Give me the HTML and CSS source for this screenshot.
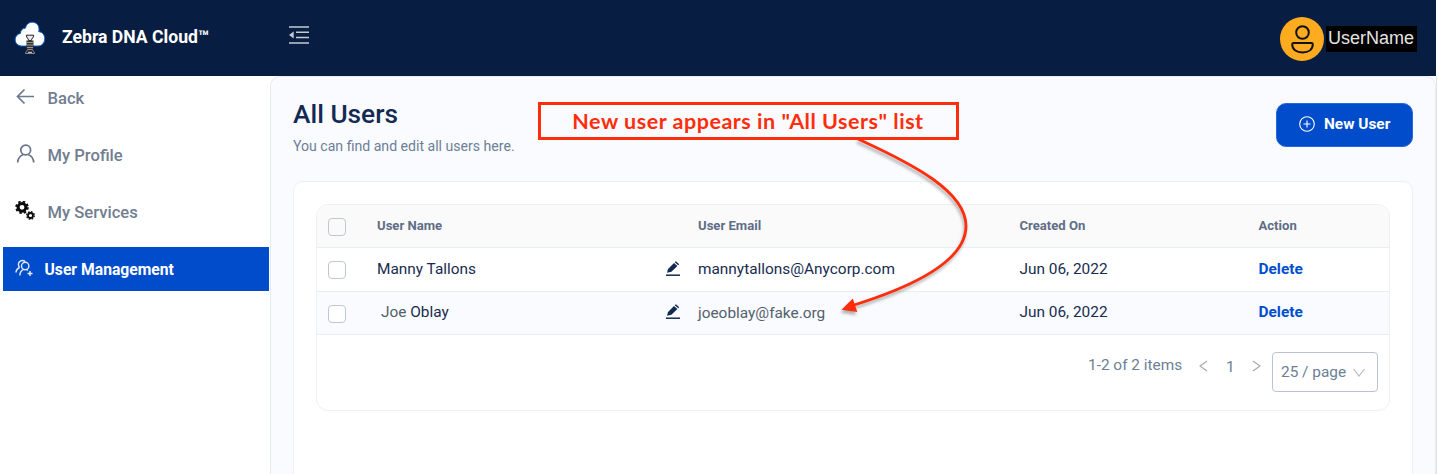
FILE: index.html
```html
<!DOCTYPE html>
<html lang="en">
<head>
<meta charset="utf-8">
<title>Zebra DNA Cloud</title>
<link rel="stylesheet" href="styles.css">
</head>
<body>
<div class="app">
  <header class="header">
    <svg class="logo" width="32" height="34" viewBox="0 0 32 34">
      <path d="M7 25a6.300 6.300 0 0 1-.6-12.500c.2-3.500 2.300-5.500 5-5.300C12.500 3 15 1.200 18.200 1.200c4.200 0 6.800 3 6.800 7 0 1-.1 1.600-.3 2.500 3.600.1 6 3.100 6 6.800 0 4.300-2.700 7.500-6.700 7.500z" fill="#fff" stroke="#0a62c9" stroke-width="1"/>
      <path d="M12.300 14.200h7.400c0 3-2.300 3-2.300 5.300h-2.800c0-2.300-2.300-2.300-2.300-5.300z" fill="#e8e8e8" stroke="#222" stroke-width="1"/>
      <path d="M12.500 19.500h7v8.500h-7z" fill="#333"/>
      <path d="M13 21.500h6M13 24h6M13 26.500h6" stroke="#999" stroke-width="1"/>
      <path d="M13.500 28.500h5c0 1.500 2 2 2 4h-9c0-2 2-2.500 2-4z" fill="#222" stroke="#aaa" stroke-width=".8"/>
      <path d="M14 31.300h4" stroke="#ddd"/>
    </svg>
    <span class="brand">Zebra DNA Cloud™</span>
    <svg class="fold" width="20" height="18" viewBox="0 0 20 18">
      <path d="M0 1h20M7 6.300h13M7 11.500h13M0 17h20" stroke="#c3cad3" stroke-width="1.600"/>
      <path d="M0 9l4.700-3.600v7.200z" fill="#c3cad3"/>
    </svg>
    <div class="account">
      <svg width="44" height="44" viewBox="0 0 44 44">
        <circle cx="22" cy="22" r="22" fill="#ffab1f"/>
        <circle cx="22.500" cy="15.500" r="6.300" fill="none" stroke="#111" stroke-width="2"/>
        <path d="M13.500 26h18a1.300 1.300 0 0 1 1.300 1.300c0 5-4 8.200-10.300 8.200s-10.300-3.200-10.300-8.200A1.300 1.300 0 0 1 13.500 26z" fill="none" stroke="#111" stroke-width="2"/>
      </svg>
      <span class="username">UserName</span>
    </div>
  </header>
  <div class="body">
    <nav class="sidebar">
      <a class="item"><svg width="20" height="20" viewBox="0 0 20 20"><path d="M19 9.500H3M9.500 2.500L2.500 9.500l7 7" fill="none" stroke="#6b7a90" stroke-width="1.700"/></svg><span>Back</span></a>
      <a class="item"><svg width="20" height="20" viewBox="0 0 20 20"><circle cx="10.700" cy="6" r="4.900" fill="none" stroke="#66758c" stroke-width="1.700"/><path d="M2.700 18.500c.2-4 2.300-6.700 5.400-7.800M18.700 18.500c-.2-4-2.300-6.700-5.400-7.800" fill="none" stroke="#66758c" stroke-width="1.700"/></svg><span>My Profile</span></a>
      <a class="item"><svg width="20" height="20" viewBox="0 0 20 20"><g fill="none" stroke="#0c0c0c"><circle cx="7" cy="6.300" r="3.900" stroke-width="3"/><circle cx="7" cy="6.300" r="5.800" stroke-width="1.900" stroke-dasharray="2.500 2.055"/><circle cx="15.500" cy="14.500" r="2.500" stroke-width="1.800"/><circle cx="15.500" cy="14.500" r="3.800" stroke-width="1.300" stroke-dasharray="1.600 1.384"/></g></svg><span>My Services</span></a>
      <a class="item active"><svg width="18" height="18" viewBox="0 0 18 18"><g fill="none" stroke="#e5edfa" stroke-width="1.400"><circle cx="10.200" cy="7" r="3.700"/><path d="M4.800 16.500c.1-3.400 1.700-5.300 4-6.200M4.700 8.500A4 4 0 1 1 10.200 2.600M1 13.500c.1-2.500 1.500-4 3.700-5M11.500 10.500l1.500 1M15 12v5M12.500 14.500h5"/></g></svg><span>User Management</span></a>
    </nav>
    <main class="main">
      <div class="heading">
        <div class="titles">
          <h1>All Users</h1>
          <p>You can find and edit all users here.</p>
        </div>
        <div class="callout"><span>New user appears in "All Users" list</span></div>
        <button class="new-user"><svg width="16" height="16" viewBox="0 0 16 16"><circle cx="8" cy="8" r="7.300" fill="none" stroke="#fff" stroke-width="1.100"/><path d="M8 4.500v7M4.500 8h7" stroke="#fff" stroke-width="1.100"/></svg><span>New User</span></button>
      </div>
      <section class="card">
        <div class="table">
          <div class="row head"><i class="check"></i><span>User Name</span><span></span><span>User Email</span><span>Created On</span><span>Action</span></div>
          <div class="row"><i class="check"></i><span>Manny Tallons</span>
            <svg class="pen" width="16" height="16" viewBox="0 0 16 16"><path d="M1 14.200h14" stroke="#132a4f" stroke-width="1.500"/><path d="M2 11.700l1-3.600L9 2l3.400 3-6 5.700zM9.700 1.300l1.200-1 3.300 2.900-1 1.100z" fill="#132a4f"/></svg>
            <span>mannytallons@Anycorp.com</span><span>Jun 06, 2022</span><a class="delete">Delete</a></div>
          <div class="row alt"><i class="check"></i><span class="joe"><em>Joe</em> Oblay</span>
            <svg class="pen" width="16" height="16" viewBox="0 0 16 16"><path d="M1 14.200h14" stroke="#132a4f" stroke-width="1.500"/><path d="M2 11.700l1-3.600L9 2l3.400 3-6 5.700zM9.700 1.300l1.200-1 3.300 2.900-1 1.100z" fill="#132a4f"/></svg>
            <span class="grey">joeoblay@fake.org</span><span>Jun 06, 2022</span><a class="delete">Delete</a></div>
          <div class="pager">
            <span class="count">1-2 of 2 items</span>
            <svg class="prev" width="9" height="12" viewBox="0 0 9 12"><path d="M8 1L1 6l7 5" fill="none" stroke="#a0a7b1" stroke-width="1.100"/></svg>
            <span class="page">1</span>
            <svg class="next" width="9" height="12" viewBox="0 0 9 12"><path d="M1 1l7 5-7 5" fill="none" stroke="#a0a7b1" stroke-width="1.100"/></svg>
            <div class="select"><span>25 / page</span><svg width="12" height="9" viewBox="0 0 12 9"><path d="M.6 1L6 8l5.400-7" fill="none" stroke="#b4bac2" stroke-width="1.100"/></svg></div>
          </div>
        </div>
      </section>
    </main>
  </div>
  <svg class="arrow" width="160" height="190" viewBox="830 130 160 190">
    <path d="M858 139C915 165 966 192 966 226C966 264 902 290 854 305" fill="none" stroke="#ff2d0b" stroke-width="2.800"/>
    <path d="M841.500 309.700L852.800 298.500L857.300 312Z" fill="#ff2d0b"/>
  </svg>
</div>
</body>
</html>
```
FILE: styles.css
```css
* { box-sizing: border-box; }
body { margin: 0; background: #fff; font-family: Roboto, "Liberation Sans", sans-serif; }
.app { position: relative; width: 1439px; height: 474px; overflow: hidden; }
.app span { white-space: nowrap; }
svg { display: block; flex: none; }
.header { display: flex; align-items: center; width: 1436px; height: 76px; padding: 0 19px 0 14px; background: #071d42; }
.brand { margin: -3px 0 0 16px; width: 150px; font-size: 17.6px; font-weight: 700; color: #fff; }
.fold { margin: -6px 0 0 77px; }
.account { display: flex; align-items: center; gap: 2px; margin: 2px 0 0 auto; }
.username { width: 91px; height: 26px; padding-left: 2px; background: #000; color: #e4e4e4; font: 18px/25px "Liberation Sans", Arial, sans-serif; }
.body { display: flex; width: 1437px; height: 398px; border-right: 1px solid #e2e3e8; }
.sidebar { flex: none; width: 270px; padding-left: 3px; }
.item { display: flex; align-items: center; width: 266px; height: 44px; margin-bottom: 13px; padding-left: 12px; font-size: 16.6px; font-weight: 500; color: #717d90; }
.item svg { margin-top: -3px; }
.item span { margin: 0 0 0 12.5px; }
.item.active { background: #004ccb; color: #fff; font-weight: 700; font-size: 15.7px; }
.item.active span { margin-left: 11.5px; }
.main { flex: none; width: 1166px; padding: 26px 0 0 22px; background: #fafbfe; border: 1px solid #e9ebf3; border-bottom: 0; border-radius: 10px 10px 0 0; }
.heading { display: flex; align-items: flex-start; height: 78px; width: 1120px; }
.titles { width: 244.5px; }
h1 { margin: -6px 0 0; font-size: 26.3px; line-height: 34px; font-weight: 500; color: #132a52; }
p { margin: 5px 0 0; font-size: 14.1px; line-height: 20px; color: #6c7f97; white-space: nowrap; }
.callout { display: flex; align-items: center; justify-content: center; width: 421px; height: 38px; border: 3px solid #ff2d0b; color: #ff2d0b; font: 700 21.5px/32px Lato, sans-serif; letter-spacing: .52px; margin-top: -1px; }
.new-user { display: flex; align-items: center; width: 137px; height: 44px; margin-left: auto; padding: 0 0 2px 22px; gap: 9px; border: 1px solid #2669df; border-radius: 10px; background: #004ccb; color: #fff; font: 700 15.4px Roboto, sans-serif; }
.card { width: 1120px; height: 330px; padding: 22px; background: #fff; border: 1px solid #edf0f6; border-radius: 10px; }
.table { width: 1074px; height: 207px; border: 1px solid #eeeff3; border-radius: 12px; overflow: hidden; }
.row { display: grid; grid-template-columns: 60px 288px 33px 321.5px 239px 1fr; align-items: center; height: 43px; border-bottom: 1px solid #e9eef5; color: #172c50; font-size: 15.4px; }
.row + .row { height: 44px; }
.row + .row.alt { height: 43px; background: #fafbfe; }
.row span, .row a, .pen { margin-top: -2px; }
.row.head { background: #fafafa; font-size: 13.1px; font-weight: 700; color: #5e6d86; }
.check { width: 18px; height: 18px; margin: 1px 0 0 11px; border: 1px solid #bdc7d5; border-radius: 4px; background: #fff; }
.head .check { margin-top: 2px; background: #fafafa; }
.joe { padding-left: 4px; }
.joe em { font-style: normal; color: #53616c; }
.row .grey { margin-top: 0; color: #53616c; }
.delete { color: #004ecf; font-weight: 700; }
.pager { display: flex; align-items: flex-start; padding: 17px 0 0 771px; color: #6c7f97; font-size: 15.4px; }
.pager > span { line-height: 26px; }
.count { width: 94px; }
.prev { margin: 8px 0 0 17px; }
.page { width: 10px; margin: 2px 0 0 18px; }
.next { margin: 8px 0 0 16px; }
.select { display: flex; align-items: center; width: 106px; height: 40px; margin-left: 11px; padding-left: 8px; gap: 7px; border: 1px solid #b8c4d4; border-radius: 4px; }
.arrow { position: absolute; left: 830px; top: 130px; filter: drop-shadow(-1px 3px 1.5px rgba(0,0,0,.3)); }
```
